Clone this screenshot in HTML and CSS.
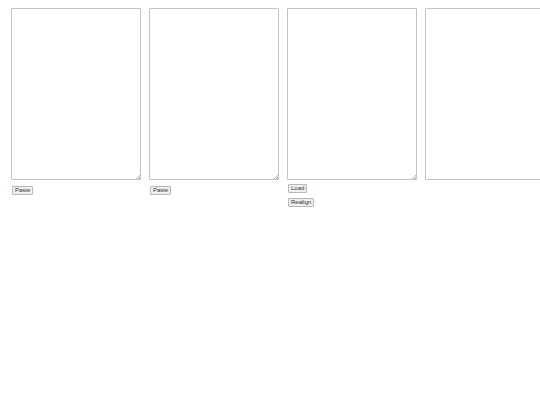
FILE: index.html
```html
<!DOCTYPE html>
<html>
<head>
<meta charset="utf-8">
<link rel="stylesheet" href="styles.css">
</head>
<body>
<div class="row">
  <div class="col">
    <textarea class="pane"></textarea>
    <div class="actions first"><button class="btn">Paste</button></div>
  </div>
  <div class="col">
    <textarea class="pane"></textarea>
    <div class="actions first"><button class="btn">Paste</button></div>
  </div>
  <div class="col">
    <textarea class="pane"></textarea>
    <div class="actions stack"><button class="btn">Load</button><button class="btn">Realign</button></div>
  </div>
  <div class="col">
    <textarea class="pane"></textarea>
  </div>
</div>
</body>
</html>
```
FILE: styles.css
```css
html, body {
  margin: 0;
  padding: 0;
  background: #ffffff;
  overflow: hidden;
}
body {
  width: 540px;
  height: 405px;
  font-family: "Liberation Sans", Arial, sans-serif;
}
.row {
  display: flex;
  gap: 8.5px;
  padding: 8px 0 0 11px;
  width: max-content;
}
.col {
  display: flex;
  flex-direction: column;
  align-items: flex-start;
  width: 129.5px;
}
.pane {
  box-sizing: border-box;
  width: 129.5px;
  height: 172px;
  margin: 0;
  border: 1px solid #c2c2c2;
  border-radius: 1px;
  background: #fff;
  display: block;
  font-size: 6px;
}
.pane::-webkit-resizer {
  background: linear-gradient(135deg,
    transparent 0 84%,
    #b8b8b8 84% 88%,
    transparent 88% 93%,
    #b8b8b8 93% 97%,
    transparent 97%);
}
.actions {
  display: flex;
  flex-direction: column;
  align-items: flex-start;
  padding-left: 1px;
}
.actions.first {
  margin-top: 6px;
}
.actions.stack {
  margin-top: 4px;
  gap: 5px;
}
.btn {
  box-sizing: border-box;
  height: 9px;
  margin: 0;
  padding: 0 2px;
  font-family: "Liberation Sans", Arial, sans-serif;
  font-size: 6px;
  line-height: 7px;
  color: #333;
  background: #efefef;
  border: 1px solid #b8b8b8;
  border-radius: 1px;
}
```
